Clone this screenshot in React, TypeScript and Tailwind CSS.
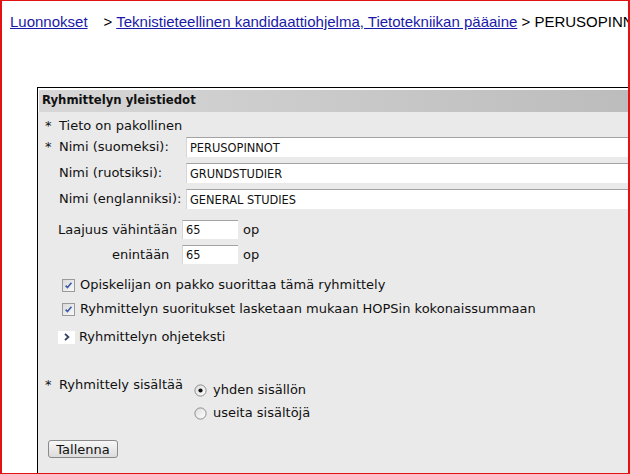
import React from "react";

const Check = () => (
  <svg width="13" height="13" viewBox="0 0 13 13" className="shrink-0">
    <defs>
      <linearGradient id="cb" x1="0" y1="0" x2="1" y2="1">
        <stop offset="0" stopColor="#d8d8d8" />
        <stop offset="1" stopColor="#fbfbfb" />
      </linearGradient>
    </defs>
    <rect x="0.5" y="0.5" width="12" height="12" fill="url(#cb)" stroke="#9a9a9a" />
    <path d="M3.6 6.6 L5.5 8.6 L9.4 3.8" stroke="#3c5aa6" strokeWidth="1.6" fill="none" />
  </svg>
);

const Radio = ({ checked }: { checked?: boolean }) => (
  <svg width="13" height="13" viewBox="0 0 13 13" className="shrink-0">
    <defs>
      <linearGradient id="rb" x1="0" y1="0" x2="1" y2="1">
        <stop offset="0" stopColor="#dcdcdc" />
        <stop offset="1" stopColor="#ffffff" />
      </linearGradient>
    </defs>
    <circle cx="6.5" cy="6.5" r="5.6" fill="url(#rb)" stroke="#8c8c8c" />
    {checked && <circle cx="6.5" cy="6.5" r="2.1" fill="#111" />}
  </svg>
);

const TextField = ({ value, className }: { value: string; className?: string }) => (
  <input
    readOnly
    defaultValue={value}
    className={
      "bg-white border-t border-l border-t-[#a3a3a3] border-l-[#d6d6d6] pl-[3px] text-[11.4px] text-[#111] outline-none font-['DejaVu_Sans',Verdana,sans-serif] " +
      (className ?? "")
    }
  />
);

export default function App() {
  const names = [
    { star: true, label: "Nimi (suomeksi):", value: "PERUSOPINNOT" },
    { star: false, label: "Nimi (ruotsiksi):", value: "GRUNDSTUDIER" },
    { star: false, label: "Nimi (englanniksi):", value: "GENERAL STUDIES" },
  ];

  return (
    <div className="h-[474px] w-[630px] overflow-hidden bg-white border-y border-x-2 border-[#e31212]">
      {/* murupolku */}
      <div className="pt-[12px] pl-[8px] whitespace-nowrap text-[15px] leading-[18px] text-black font-['Liberation_Sans',Arial,sans-serif]">
        <a className="underline text-[#1a1aa8]">Luonnokset</a>
        <span className="ml-[16px]">&gt; </span>
        <a className="underline text-[#1a1aa8]">
          Teknistieteellinen kandidaattiohjelma, Tietotekniikan pääaine
        </a>
        <span> &gt; PERUSOPINNOT</span>
      </div>

      {/* lomake */}
      <div className="ml-[35px] mt-[56px] w-[640px] h-[420px] border border-black bg-[#eaeaea] text-[13px] text-[#111] font-['DejaVu_Sans',Verdana,sans-serif]">
        <div className="bg-white pt-[2px] pl-[1px]">
          <div className="h-[22px] flex items-center pl-[3px] bg-gradient-to-r from-[#d7d7d7] to-[#bababa] font-bold text-[11.7px]">
            Ryhmittelyn yleistiedot
          </div>
        </div>

        <div className="pl-[7px]">
          <div className="h-[20px] mt-[4px] flex items-center">
            <span className="w-[14px]">*</span>
            <span>Tieto on pakollinen</span>
          </div>

          {names.map((n, i) => (
            <div key={n.label} className={"h-[20px] flex items-center " + (i === 0 ? "mt-[1px]" : "mt-[6px]")}>
              <span className="w-[14px]">{n.star ? "*" : ""}</span>
              <span className="w-[127px]">{n.label}</span>
              <TextField value={n.value} className="h-[20px] flex-1" />
            </div>
          ))}

          <div className="mt-[11px] h-[19px] flex items-center pl-[13px]">
            <span className="w-[124px]">Laajuus vähintään</span>
            <TextField value="65" className="h-[19px] w-[56px]" />
            <span className="ml-[5px]">op</span>
          </div>
          <div className="mt-[6px] h-[19px] flex items-center pl-[13px]">
            <span className="w-[124px] pl-[54px]">enintään</span>
            <TextField value="65" className="h-[19px] w-[56px]" />
            <span className="ml-[5px]">op</span>
          </div>

          <div className="mt-[11px] h-[20px] flex items-center gap-[5px] pl-[17px]">
            <Check />
            <span>Opiskelijan on pakko suorittaa tämä ryhmittely</span>
          </div>
          <div className="mt-[4px] h-[20px] flex items-center gap-[5px] pl-[17px]">
            <Check />
            <span>Ryhmittelyn suoritukset lasketaan mukaan HOPSin kokonaissummaan</span>
          </div>

          <div className="mt-[8px] h-[20px] flex items-center gap-[4px] pl-[13px]">
            <span className="w-[17px] h-[13px] bg-white flex items-center justify-center">
              <svg width="6" height="8" viewBox="0 0 6 8">
                <path d="M1 0.8 L4.4 4 L1 7.2" stroke="#2f3f66" strokeWidth="1.8" fill="none" />
              </svg>
            </span>
            <span>Ryhmittelyn ohjeteksti</span>
          </div>

          <div className="mt-[28px] flex items-start">
            <div className="h-[20px] flex items-center">
              <span className="w-[14px]">*</span>
              <span className="w-[135px]">Ryhmittely sisältää</span>
            </div>
            <div className="pt-[5px] flex flex-col gap-[3px]">
              <label className="h-[20px] flex items-center gap-[6px]">
                <Radio checked />
                <span>yhden sisällön</span>
              </label>
              <label className="h-[20px] flex items-center gap-[6px]">
                <Radio />
                <span>useita sisältöjä</span>
              </label>
            </div>
          </div>

          <button className="mt-[17px] ml-[3px] h-[18px] w-[70px] flex items-center justify-center rounded-[3px] border border-[#8a8a8a] bg-gradient-to-b from-[#f7f7f7] to-[#dcdcdc] text-[13px] leading-none">
            Tallenna
          </button>
        </div>
      </div>
    </div>
  );
}
